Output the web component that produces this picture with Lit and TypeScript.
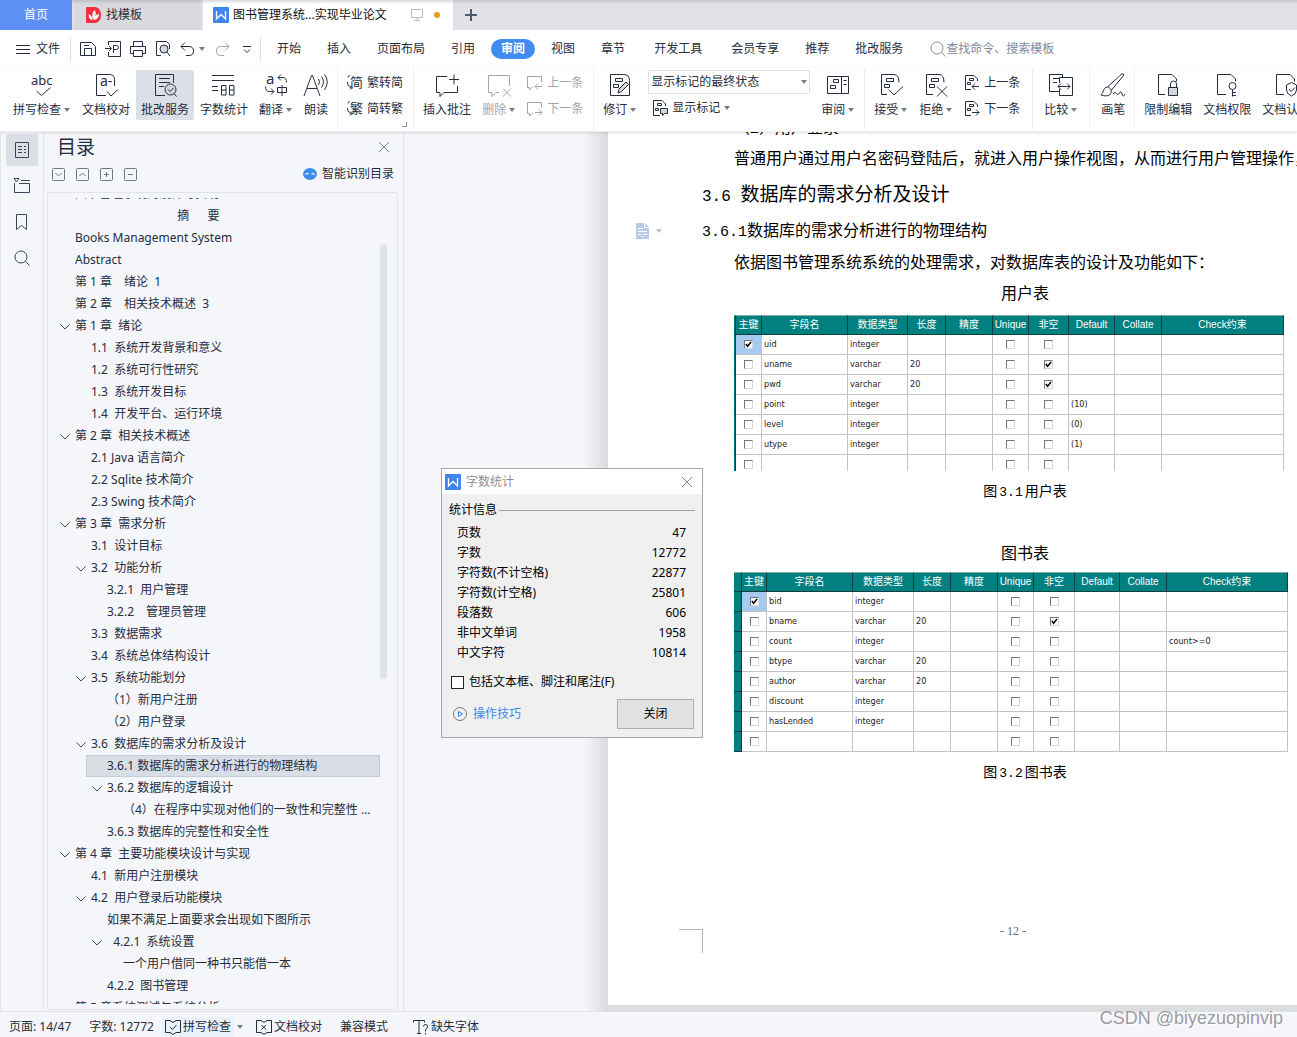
import { LitElement, html, svg, css, nothing, TemplateResult } from "lit";
import { customElement, property } from "lit/decorators.js";
import { classMap } from "lit/directives/class-map.js";

const ICONS: Record<string, TemplateResult> = {
  spell: svg`<text class="t" x="1" y="12" font-size="13">abc</text><path d="M6.5 18l5 4.5 9-8"/>`,
  proof: svg`<path d="M12 22.500H2.500V1.500H15.500Q20.500 1.500 20.500 6.500V13"/><text class="t" x="6" y="13" font-size="14">a-</text><path d="M13 18.500l4 4.500 7-6.500"/>`,
  service: svg`<path d="M12 22.500H2.500V1.500H20.500V10M6 5.500h11M6 9.500h11M6 13.500h5"/><circle class="soft" cx="17.500" cy="16.500" r="5.500"/><path d="M15 16.500l2 2 3.500-3.500M21 20.500l2.500 3"/>`,
  count: svg`<path d="M0 2.500h22M0 7.500h22M0 13.500h6M0 17.500h6M9.500 12.500h4.500v9.500h-4.500zM17.500 12.500h4.500v9.500h-4.500zM9.500 17h4.500M17.500 17h4.500"/>`,
  translate: svg`<text class="t" x="2" y="11" font-size="15">a</text><path d="M17 1.500l-3 3 3 3M14 4.500h5q3.500 0 3.500 5M1.500 13.500q0 5 4 5h4M7 15.500l3 3-3 3M13.500 14.500h9v5h-9zM18 12v11"/>`,
  read: svg`<path d="M0 23L7.500 2.500h1L16 23M3 15.500h10M14.500 6q2 2.500 0 6M17.500 3.500q4 5 0 11M20.500 1.500q5.500 7 0 15.500"/>`,
  comment: svg`<path d="M12 3.500H1.500v16h3.500v4l4-4h13.500V13M14 6.500h10M19 1.500v10"/>`,
  uncomment: svg`<path d="M12 19.500H9l-4 4v-4H1.500v-17h21V13M16 15.500l8 8M24 15.500l-8 8"/>`,
  revise: svg`<path d="M2.500 1.500H15.500Q21.500 1.500 21.500 7.500V22.500H2.500zM7.500 5.500h7v3h-7zM5.500 11.500h5v3h-5z"/><path class="soft" d="M10 20l1-4 7-7 2.500 2.500-7 7z"/>`,
  pane: svg`<path d="M1.500 3.500h21v17h-21zM15.500 3.500v17M7.500 6.500h5v3h-5zM4.500 12.500h5v3h-5zM17.500 7.500h3M17.500 11.500h3"/>`,
  accept: svg`<path d="M8 21.500H2.500v-20H15q5 0 5 8M7.500 5.500h7v3h-7zM5.500 11.500h5v3h-5zM9.500 16.500l5.500 5.500 9-8.500"/>`,
  reject: svg`<path d="M9 21.500H2.500v-20H15q5 0 5 8M7.500 5.500h7v3h-7zM5.500 11.500h5v3h-5zM13 13.500l10 10M23 13.500l-10 10"/>`,
  compare: svg`<path d="M10.500 18.500H.500v-17h13v3M4 5.500h7M4 9.500h4M10.500 10V4.500h13v18h-13V16M9 13.500h12M12 10.500l-3 3 3 3M18 10.500l3 3-3 3"/>`,
  brush: svg`<path d="M22.500 1q-2-.5-4 2L7 13.500l3.500 3.500L20.500 5q3-3 2-4M7 14q-3-.5-4 2.500t-3 5.500q6 2 9-.5 2-2 1-4.500M12 21q2-3 3.500-.5t3-.5 2.500 1 3 0"/>`,
  lock: svg`<path d="M9 21.500H2.500v-20H16l4.500 4.500v2.500M14.500 14v-3q0-3 3-3t3 3v3"/><path class="soft" d="M12.500 14.500h9v8h-9z"/>`,
  key: svg`<path d="M11 21.500H2.500v-20H16l4.500 4.500v2.500M17.500 16.500v7M17.500 19.500h3.500M17.500 22.500h3.500"/><circle cx="17.500" cy="13" r="3.500"/>`,
  shield: svg`<path d="M10 21.500H2.500v-20H16l4.500 4.500v2.500M12.500 12l5-2.500 5 2.500v5q0 4-5 6-5-2-5-6zM15 16l2 2.500 4-4"/>`,
  toSimple: svg`<text class="t" x="3" y="12" font-size="13">简</text><path d="M2.500 0l-1.500 2.500M.500 7q0 5 4 5.500M3 10.500l2 2-2 2"/>`,
  toTrad: svg`<text class="t" x="3" y="12" font-size="13">繁</text><path d="M2.500 0l-1.500 2.500M.500 7q0 5 4 5.500M3 10.500l2 2-2 2"/>`,
  prevC: svg`<path d="M6 12.500H5l-2.500 2.500v-2.500h-2v-11h14V7M8 11.500h7M11 8.500l-3 3 3 3"/>`,
  nextC: svg`<path d="M6 12.500H5l-2.500 2.500v-2.500h-2v-11h14V7M8 11.500h7M12 8.500l3 3-3 3"/>`,
  prevR: svg`<path d="M7 14.500H1.500v-14H10l3.500 3.500v2M5.500 3.500h4v2h-4zM3.500 7.500h3v2h-3zM8 11.500h7M11 8.500l-3 3 3 3"/>`,
  nextR: svg`<path d="M7 14.500H1.500v-14H10l3.500 3.500v2M5.500 3.500h4v2h-4zM3.500 7.500h3v2h-3zM8 11.500h7M12 8.500l3 3-3 3"/>`,
  marks: svg`<path d="M8 15.500H1.500v-15H10l3.500 3.500v2M5.500 3.500h4v2h-4zM3.500 8.500h3v2h-3z"/><path class="soft" d="M8.500 8.500h7v5h-3l-2 2v-2h-2z"/>`,
  menu: svg`<path d="M0 3.500h14M0 7.500h14M0 11.500h14"/>`,
  save: svg`<path d="M.500 1.500h11l4 4v9H.500zM4.500 14.500v-7h7v7M4 4.500h5"/>`,
  exportP: svg`<path d="M3.500 4V.500h12v15h-12V11M0 7.500h6M4 5l2.500 2.500L4 10M8.500 12V4.500h3q2 0 2 2t-2 2h-3"/>`,
  print: svg`<path d="M3.500 5.500v-5h9v5M3.500 12.500h-3v-7h15v7h-3M3.500 9.500h9v6h-9z"/>`,
  preview: svg`<path d="M6 14.500H1.500V.500h10l3 3V8"/><circle class="soft" cx="9" cy="8" r="4"/><path d="M12 11l3 4"/>`,
  undo: svg`<path d="M5 1.500l-4 4 4 4M1 5.500h8q4.500 0 4.500 4.500t-4.500 4.500H6"/>`,
  redo: svg`<path d="M11 1.500l4 4-4 4M15 5.500H7q-4.500 0-4.500 4.500T7 14.500h3"/>`,
  more: svg`<path d="M4 5.500h8M5 8.500l3 3 3-3"/>`,
  search: svg`<circle cx="7" cy="7" r="6"/><path d="M11.500 11.500l4 4"/>`,
  outline: svg`<path d="M1.500.500h13v15h-13zM4 4.500h4M10 4.500h2M4 7.500h4M10 7.500h2M4 10.500h4M10 10.500h2"/>`,
  chapters: svg`<path d="M0 .500h5L2.500 4zM7 2.500h9M.500 5v9.500h15v-9H5"/>`,
  bookmark: svg`<path d="M2.500.500h10v15l-5-4-5 4z"/>`,
  close: svg`<path d="M3 3l10 10M13 3L3 13"/>`,
  down: svg`<rect x=".500" y=".500" width="12" height="12" rx="1"/><path d="M3.500 5l3 3 3-3"/>`,
  up: svg`<rect x=".500" y=".500" width="12" height="12" rx="1"/><path d="M3.500 8l3-3 3 3"/>`,
  plus: svg`<rect x=".500" y=".500" width="12" height="12" rx="1"/><path d="M4 6.500h5M6.500 4v5"/>`,
  minus: svg`<rect x=".500" y=".500" width="12" height="12" rx="1"/><path d="M4 6.500h5"/>`,
  chevron: svg`<path d="M.500 3.500l4.500 4.500L9.500 3.500"/>`,
  screen: svg`<path d="M.500 2.500h11v8h-11zM6 10.500v3M3 13.500h6"/>`,
  add: svg`<path stroke-width="2" d="M1 7h12M7 1v12"/>`,
  checkBook: svg`<path d="M5 1.500H.500v12H5l3 2 3-2h4.500v-12H11l-3 2-3-2M5 8l2.500 2.500L11.500 6"/>`,
  crossBook: svg`<path d="M5 1.500H.500v12H5l3 2 3-2h4.500v-12H11l-3 2-3-2M5.500 6l4.500 4.500M10 6l-4.500 4.500"/>`,
  font: svg`<path d="M.500 3.500v-2h11v2M6 1.500v12.500M4 14.500h4M10.500 7.500q0-2 2-2t2 2-2 3v2M12.500 14v1.500"/>`,
  play: svg`<circle cx="7" cy="7" r="6.500"/><path class="blue" d="M5.500 4.500v5l4-2.500z"/>`,
};

const icon = (name: string, size = 16) =>
  html`<svg class="ico" width=${size} height=${size} viewBox="0 0 ${size} ${size}" aria-hidden="true">${ICONS[name]}</svg>`;

const caret = html`<span class="caret"></span>`;

const wLogo = html`<svg width="16" height="16" viewBox="0 0 16 16" aria-hidden="true">
  <rect width="16" height="16" rx="1" fill="#3f86f0"></rect>
  <path d="M3.500 4v8L8 7.500l4.500 4.500V4" fill="none" stroke="#fff" stroke-width="1.300"></path>
</svg>`;

const base = css`
  * { box-sizing: border-box; }
  :host { font: 12px/16px "Noto Sans", "Noto Sans CJK SC", sans-serif; color: #262d40; }
  button, select, input { font: inherit; color: inherit; margin: 0; padding: 0; border: 0; background: none; border-radius: 0; }
  button { display: inline-flex; align-items: center; white-space: nowrap; flex: none; }
  button:disabled { color: #a3a5ab; }
  svg { display: block; flex: none; }
  .ico { fill: none; stroke: currentColor; stroke-width: 1; overflow: visible; }
  .ico .t { fill: currentColor; stroke: none; }
  .ico .soft { fill: #d3d8df; }
  .ico .blue { stroke: #3d88ee; }
  .caret { flex: none; border: 3px solid transparent; border-top: 4px solid #75808f; border-bottom: 0; }
`;

@customElement("wps-tabs")
class WpsTabs extends LitElement {
  static styles = [base, css`
    :host { display: flex; height: 30px; background: linear-gradient(#c4c5c9, #e1e2e7 4px); }
    .tab { height: 30px; gap: 4px; padding-left: 12px; }
    .home { width: 72px; padding: 0; justify-content: center; background: #5d8ff5; color: #fff; }
    .tpl { width: 127px; margin-left: 2px; background: linear-gradient(#bfc0c4, #d8d9dc 4px); }
    .doc { width: 250px; margin-left: 2px; padding-left: 10px; background: linear-gradient(#d9dadc, #fff 4px); color: #111; }
    .screen { margin-left: 20px; color: #b3bccb; }
    .dot { width: 6px; height: 6px; margin-left: 3px; border-radius: 50%; background: #e89b0c; }
    .new { width: 36px; justify-content: center; color: #4e5970; }
  `];
  render() {
    return html`
      <button class="tab home">首页</button>
      <button class="tab tpl">
        <svg width="16" height="16" viewBox="0 0 16 16" aria-hidden="true">
          <path d="M1 0h9q5 2 5 8t-5 8H1q-1 0-1-1V1q0-1 1-1z" fill="#f3303f"></path>
          <path d="M6.500 13Q3 12.500 2.500 7.500q3.500 0 4 5.500zM7 12Q5 7 8.500 3q3 4-1 9.500zM8 13q0-5 5-6 0 5-5 6z" fill="#fff"></path>
        </svg>找模板</button>
      <button class="tab doc">${wLogo}图书管理系统...实现毕业论文
        <span class="screen">${icon("screen")}</span><span class="dot"></span></button>
      <button class="new" aria-label="新建标签">${icon("add", 14)}</button>`;
  }
}

@customElement("wps-menubar")
class WpsMenubar extends LitElement {
  static styles = [base, css`
    :host { display: flex; align-items: center; height: 38px; padding-left: 16px; background: #fff; }
    .file { gap: 5px; }
    .sep { width: 1px; height: 24px; background: #dcdfe5; flex: none; }
    .quick { display: flex; align-items: center; gap: 9px; padding: 0 5px 0 9px; }
    .file + .sep { margin-left: 10px; }
    .undo { gap: 3px; }
    .menus { display: flex; gap: 6px; padding-left: 6px; }
    .menus button { height: 20px; padding: 0 10px; border-radius: 10px; }
    .menus .spaced { margin-left: 3px; }
    .menus .on { background: #418cf0; color: #fff; font-weight: 700; }
    .find { display: flex; align-items: center; margin-left: 17px; color: #8490a6; }
    .find input { width: 160px; }
    .find input::placeholder { color: #7d89a1; opacity: 1; }
  `];
  render() {
    const menus = ["开始", "插入", "页面布局", "引用", "审阅", "视图", "章节", "开发工具", "会员专享", "推荐", "批改服务"];
    const spaced = ["开发工具", "会员专享"];
    return html`
      <button class="file">${icon("menu", 15)}文件</button><span class="sep"></span>
      <div class="quick">
        <button aria-label="保存">${icon("save")}</button>
        <button aria-label="输出为PDF">${icon("exportP")}</button>
        <button aria-label="打印">${icon("print")}</button>
        <button aria-label="打印预览">${icon("preview")}</button>
        <button class="undo" aria-label="撤销">${icon("undo")}${caret}</button>
        <button aria-label="恢复" disabled>${icon("redo")}</button>
        <button aria-label="更多">${icon("more")}</button>
      </div>
      <span class="sep"></span>
      <div class="menus">${menus.map((m) => html`<button class=${classMap({ on: m === "审阅", spaced: spaced.includes(m) })}>${m}</button>`)}</div>
      <label class="find">${icon("search")}<input aria-label="搜索" placeholder="查找命令、搜索模板"></label>`;
  }
}

@customElement("wps-ribbon")
class WpsRibbon extends LitElement {
  static styles = [base, css`
    :host { display: flex; height: 64px; padding-left: 8px; background: #fff; overflow: hidden; border-bottom: 1px solid #eceef1; position: relative; z-index: 1; box-shadow: 0 1px 3px rgba(0, 0, 0, .12); }
    .big { flex-direction: column; height: 50px; margin: 2px 1px 0 0; padding: 3px 5px 0; gap: 5px; }
    .big.on { background: #dbe0e6; border-radius: 2px; }
    .big:has(+ .sep) { margin-right: 0; }
    .label { display: flex; align-items: center; }
    .label .caret { margin: 0 1px 0 3px; }
    .sep { flex: none; width: 1px; height: 62px; margin: 0 4px; background: #eceef1; }
    .sep.wide { margin: 0 6px; }
    .stack { display: flex; flex-direction: column; flex: none; gap: 6px; padding: 5px 6px 0 5px; position: relative; }
    .stack button { gap: 4px; height: 20px; }
    .corner { position: absolute; right: 2px; bottom: 4px; width: 5px; height: 5px; border: solid #8a94a3; border-width: 0 1px 1px 0; }
    .view { padding-top: 2px; gap: 4px; }
    .pick { position: relative; display: flex; align-items: center; }
    .pick select { appearance: none; width: 162px; height: 24px; padding-left: 2px; border: 1px solid #dcdfe4; border-radius: 2px; background: #fff; }
    .pick .caret { position: absolute; right: 3px; pointer-events: none; }
    .view button { margin-left: 4px; }
  `];
  big(ic: string, text: string, drop = false, on = false, off = false) {
    return html`<button class=${classMap({ big: true, on })} ?disabled=${off}>${icon(ic, 24)}<span class="label">${text}${drop ? caret : nothing}</span></button>`;
  }
  small(ic: string, text: string, off = false) {
    return html`<button ?disabled=${off}>${icon(ic)}${text}</button>`;
  }
  render() {
    const sep = html`<span class="sep"></span>`;
    const wide = html`<span class="sep wide"></span>`;
    return html`
      ${this.big("spell", "拼写检查", true)}${this.big("proof", "文档校对")}${this.big("service", "批改服务", false, true)}
      ${this.big("count", "字数统计")}${this.big("translate", "翻译", true)}${this.big("read", "朗读")}${sep}
      <div class="stack">${this.small("toSimple", "繁转简")}${this.small("toTrad", "简转繁")}<span class="corner"></span></div>${sep}
      ${this.big("comment", "插入批注")}${this.big("uncomment", "删除", true, false, true)}
      <div class="stack">${this.small("prevC", "上一条", true)}${this.small("nextC", "下一条", true)}</div>${sep}
      ${this.big("revise", "修订", true)}
      <div class="stack view">
        <span class="pick"><select aria-label="显示状态"><option>显示标记的最终状态</option></select>${caret}</span>
        <button>${icon("marks")}显示标记${caret}</button>
      </div>
      ${this.big("pane", "审阅", true)}${sep}
      ${this.big("accept", "接受", true)}${this.big("reject", "拒绝", true)}
      <div class="stack">${this.small("prevR", "上一条")}${this.small("nextR", "下一条")}</div>${wide}
      ${this.big("compare", "比较", true)}${wide}
      ${this.big("brush", "画笔")}${sep}
      ${this.big("lock", "限制编辑")}${this.big("key", "文档权限")}${this.big("shield", "文档认证")}`;
  }
}

type Row = [level: number, text: string, open?: boolean];
const TOC: Row[] = [
  [0, "图书管理系统的设计与实现"],
  [0, "\u3000\u3000\u3000\u3000\u3000\u3000\u3000\u3000  摘\u3000  要"],
  [0, "Books Management System"],
  [0, "Abstract"],
  [0, "第 1 章\u3000绪论  1"],
  [0, "第 2 章\u3000相关技术概述  3"],
  [0, "第 1 章  绪论", true],
  [1, "1.1  系统开发背景和意义"],
  [1, "1.2  系统可行性研究"],
  [1, "1.3  系统开发目标"],
  [1, "1.4  开发平台、运行环境"],
  [0, "第 2 章  相关技术概述", true],
  [1, "2.1 Java 语言简介"],
  [1, "2.2 Sqlite 技术简介"],
  [1, "2.3 Swing 技术简介"],
  [0, "第 3 章  需求分析", true],
  [1, "3.1  设计目标"],
  [1, "3.2  功能分析", true],
  [2, "3.2.1  用户管理"],
  [2, "3.2.2\u3000管理员管理"],
  [1, "3.3  数据需求"],
  [1, "3.4  系统总体结构设计"],
  [1, "3.5  系统功能划分", true],
  [2, "（1）新用户注册"],
  [2, "（2）用户登录"],
  [1, "3.6  数据库的需求分析及设计", true],
  [2, "3.6.1 数据库的需求分析进行的物理结构"],
  [2, "3.6.2 数据库的逻辑设计", true],
  [3, "（4）在程序中实现对他们的一致性和完整性 的控制"],
  [2, "3.6.3 数据库的完整性和安全性"],
  [0, "第 4 章  主要功能模块设计与实现", true],
  [1, "4.1  新用户注册模块"],
  [1, "4.2  用户登录后功能模块", true],
  [2, "如果不满足上面要求会出现如下图所示"],
  [2, "  4.2.1  系统设置", true],
  [3, "一个用户借同一种书只能借一本"],
  [2, "4.2.2  图书管理"],
  [0, "第 5 章系统测试与系统分析"],
];

@customElement("wps-outline")
class WpsOutline extends LitElement {
  static styles = [base, css`
    :host { display: flex; flex: none; min-height: 0; border-left: 1px solid #e3e6ea; }
    .rail { width: 43px; display: flex; flex-direction: column; align-items: center; gap: 4px; padding-top: 2px; border-right: 1px solid #e1e4e9; color: #3a455c; }
    .rail button { width: 32px; height: 32px; justify-content: center; border-radius: 2px; }
    .rail .on { background: #dbdfe6; }
    .panel { width: 360px; display: flex; flex-direction: column; padding: 4px 5px 0 3px; border-right: 1px solid #e1e4e9; }
    .head, .tools { display: flex; align-items: center; justify-content: space-between; padding-left: 10px; }
    .head { height: 22px; padding-right: 6px; }
    .head button { color: #7b8494; }
    h2 { margin: 0; font-size: 19px; line-height: 22px; font-weight: 400; }
    .tools { height: 26px; margin: 3px 0 5px; padding: 0 4px 0 5px; }
    .set { display: flex; gap: 11px; color: #6d7786; }
    .smart { gap: 5px; }
    .tree { flex: 1; min-height: 0; display: flex; margin: 0 0 1px; padding: 5px 10px 5px 6px; border: 1px solid #e1e4e9; border-radius: 2px; }
    .scroll { flex: 1; min-width: 0; overflow: hidden; }
    ul { list-style: none; margin: -15px 0 0; padding: 0; }
    li { display: flex; }
    .l1 { padding-left: 16px; } .l2 { padding-left: 32px; } .l3 { padding-left: 48px; }
    li button { flex: 1; min-width: 0; height: 22px; border: 1px solid transparent; padding-left: 5px; text-align: left; }
    li .on { background: #d9dde5; border-color: #c5ced8; }
    .slot { width: 15px; flex: none; color: #3f4a5e; }
    .name { flex: 1; min-width: 0; padding-right: 4px; overflow: hidden; text-overflow: ellipsis; white-space: pre; }
    .bar { width: 7px; margin-top: 46px; height: 54%; border-radius: 4px; background: #dfe2e6; }
  `];
  render() {
    return html`
      <nav class="rail" aria-label="侧栏">
        <button class="on" aria-label="目录">${icon("outline")}</button>
        <button aria-label="章节">${icon("chapters")}</button>
        <button aria-label="书签">${icon("bookmark")}</button>
        <button aria-label="查找">${icon("search")}</button>
      </nav>
      <section class="panel">
        <div class="head"><h2>目录</h2><button aria-label="关闭目录">${icon("close")}</button></div>
        <div class="tools">
          <div class="set">
            <button aria-label="展开">${icon("down", 13)}</button><button aria-label="收起">${icon("up", 13)}</button>
            <button aria-label="添加">${icon("plus", 13)}</button><button aria-label="删除">${icon("minus", 13)}</button>
          </div>
          <button class="smart"><svg width="14" height="14" viewBox="0 0 14 14" aria-hidden="true">
            <ellipse cx="7" cy="7" rx="7" ry="6" fill="#3d8bee"></ellipse>
            <path d="M2.500 8q1-2.500 3-1M8.500 7q2-1.500 3 1" fill="none" stroke="#fff" stroke-width="1.200"></path></svg>智能识别目录</button>
        </div>
        <div class="tree">
          <div class="scroll"><ul>${TOC.map(([level, text, open]) => html`
            <li class="l${level}"><button class=${classMap({ on: text.startsWith("3.6.1") })}>
              <span class="slot">${open ? icon("chevron", 10) : nothing}</span><span class="name">${text}</span></button></li>`)}</ul></div>
          <span class="bar"></span>
        </div>
      </section>`;
  }
}

type Field = { pk?: boolean; name?: string; type?: string; len?: string; required?: boolean; def?: string; check?: string };
const HEADS = ["", "主键", "字段名", "数据类型", "长度", "精度", "Unique", "非空", "Default", "Collate", "Check约束"];

@customElement("schema-table")
class SchemaTable extends LitElement {
  @property({ attribute: false }) widths: number[] = [];
  @property({ attribute: false }) fields: Field[] = [];
  @property({ type: Boolean, reflect: true }) cut = false;
  static styles = [base, css`
    :host { display: block; }
    table { table-layout: fixed; width: 0; border-collapse: separate; border-spacing: 0; color: #222; }
    th, td { height: 20px; overflow: hidden; white-space: nowrap; vertical-align: top; }
    th { padding: 0; border-right: 1px solid #123f3f; border-bottom: 1px solid #123f3f; border-top: 1px solid #8aa; background: #008080; color: #fff; font: 10px/18px "Liberation Sans", "Noto Sans CJK SC", sans-serif; text-align: center; }
    td { padding: 0 0 0 2px; border-right: 1px solid #c3c3c3; border-bottom: 1px solid #c3c3c3; font: 9px/18px "DejaVu Sans Condensed", "DejaVu Sans", sans-serif; }
    .edge { padding: 0; background: #008080; border-right: 1px solid #123f3f; border-bottom-color: #123f3f; }
    .box { padding: 0; text-align: center; }
    .box.on { background: #a6caf0; }
    :host([cut]) tr:last-child td { height: 16px; border-bottom: 0; }
    input { appearance: none; display: block; width: 9px; height: 9px; margin: 5px auto 0; background: #fff; border: 1px solid #d8d8d8; border-top-color: #777; border-left-color: #777; }
    input:checked { background: #fff url('data:image/svg+xml,<svg xmlns="http://www.w3.org/2000/svg" viewBox="0 0 8 8"><path d="M1 3.500L3 6l4-5" fill="none" stroke="black" stroke-width="1.800"/></svg>') center / 7px no-repeat; }
  `];
  box(label: string, checked = false, on = false) {
    return html`<td class=${classMap({ box: true, on })}><input type="checkbox" aria-label=${label} .checked=${checked}></td>`;
  }
  render() {
    return html`<table>
      <colgroup>${this.widths.map((w) => html`<col style="width:${w}px">`)}</colgroup>
      <thead><tr>${HEADS.map((h) => html`<th scope="col">${h}</th>`)}</tr></thead>
      <tbody>${this.fields.map((f) => html`<tr>
        <td class="edge"></td>${this.box("主键", f.pk, f.pk)}<td>${f.name}</td><td>${f.type}</td><td>${f.len}</td><td></td>
        ${this.box("Unique")}${this.box("非空", f.required)}<td>${f.def}</td><td></td><td>${f.check}</td></tr>`)}</tbody>
    </table>`;
  }
}

const USERS: Field[] = [
  { pk: true, name: "uid", type: "integer" },
  { name: "uname", type: "varchar", len: "20", required: true },
  { name: "pwd", type: "varchar", len: "20", required: true },
  { name: "point", type: "integer", def: "(10)" },
  { name: "level", type: "integer", def: "(0)" },
  { name: "utype", type: "integer", def: "(1)" },
  {},
];
const BOOKS: Field[] = [
  { pk: true, name: "bid", type: "integer" },
  { name: "bname", type: "varchar", len: "20", required: true },
  { name: "count", type: "integer", check: "count>=0" },
  { name: "btype", type: "varchar", len: "20" },
  { name: "author", type: "varchar", len: "20" },
  { name: "discount", type: "integer" },
  { name: "hasLended", type: "integer" },
  {},
];

@customElement("wps-document")
class WpsDocument extends LitElement {
  static styles = [base, css`
    :host { display: flex; flex: 1; min-width: 0; overflow: hidden; padding: 0 0 6px 204px; background: linear-gradient(90deg, transparent 180px, #d9dadd 204px, #dcdddf 204px); }
    .paper { flex: none; width: 810px; padding: 0 94px; background: #fff; color: #000; white-space: nowrap; overflow: hidden; display: flex; flex-direction: column; }
    p, h3, h4 { margin: 0; font: 16px/31px "Liberation Sans", "Noto Sans CJK SC", sans-serif; }
    .clip { margin-top: -20px; }
    .ind { padding-left: 32px; }
    .mid { padding-left: 24px; text-align: center; }
    h3 { font-size: 19px; line-height: 41px; }
    h4 { line-height: 32px; }
    .num { font-family: "Liberation Mono", monospace; font-size: 15px; line-height: 1; }
    h3 .num { font-size: 16px; }
    .mark { display: flex; align-items: center; }
    .hint { gap: 6px; width: 66px; margin-left: -66px; }
    .hint .caret { border-top-color: #b9bec7; }
    .cap { font-size: 14px; line-height: 40px; }
    .cap .num { font-size: 13px; padding: 0 2px; }
    .title { margin-top: 27px; }
    schema-table { margin: 6px 0 0 32px; }
    .title + schema-table { margin-top: 3px; }
    footer { display: flex; margin: 137px 0 0 -23px; }
    .crop { width: 24px; height: 24px; border: solid #b9b9b9; border-width: 1px 1px 0 0; }
    .page { flex: 1; text-align: center; padding-right: 1px; font: 12px/5px "Liberation Serif", serif; color: #666; }
  `];
  render() {
    return html`<article class="paper">
      <p class="ind clip">（2）用户登录</p>
      <p class="ind">普通用户通过用户名密码登陆后，就进入用户操作视图，从而进行用户管理操作，</p>
      <h3><span class="num">3.6 </span>数据库的需求分析及设计</h3>
      <div class="mark"><button class="hint" aria-label="段落选项">
        <svg width="14" height="16" viewBox="0 0 14 16" aria-hidden="true"><path d="M0 0h9l4 4v12H0z" fill="#b9cbe8"></path>
          <path d="M8.500 0v4.500H13M2 5.500h5M2 8.500h9M2 11.500h3M7 11.500h4M7 13.500h-2" stroke="#fff" fill="none"></path></svg>${caret}</button>
        <h4><span class="num">3.6.1</span>数据库的需求分析进行的物理结构</h4></div>
      <p class="ind">依据图书管理系统系统的处理需求，对数据库表的设计及功能如下：</p>
      <p class="mid">用户表</p>
      <schema-table cut .widths=${[2, 26, 86, 60, 38, 47, 36, 40, 46, 47, 122]} .fields=${USERS}></schema-table>
      <p class="mid cap">图<span class="num">3.1</span>用户表</p>
      <p class="mid title">图书表</p>
      <schema-table .widths=${[8, 25, 86, 61, 37, 47, 36, 41, 45, 47, 121]} .fields=${BOOKS}></schema-table>
      <p class="mid cap">图<span class="num">3.2</span>图书表</p>
      <footer><span class="crop"></span><span class="page">- 12 -</span></footer>
    </article>`;
  }
}

@customElement("count-dialog")
class CountDialog extends LitElement {
  static styles = [base, css`
    :host { display: block; width: 262px; border: 1px solid #a5a7aa; background: #f0f0f0; color: #000; }
    header { display: flex; align-items: center; gap: 5px; height: 25px; padding: 0 7px 0 3px; background: #fff; color: #8f8f8f; }
    header button { margin-left: auto; color: #888; }
    .legend { display: flex; align-items: center; gap: 2px; padding: 8px 7px 5px; }
    .legend::after { content: ""; flex: 1; height: 1px; background: #a0a0a0; }
    dl { margin: 0; padding: 0 16px 0 15px; }
    dl div { display: flex; justify-content: space-between; line-height: 20px; }
    dd { margin: 0; }
    .opt { display: flex; align-items: center; gap: 5px; padding: 11px 9px 0; }
    .opt input { appearance: none; width: 13px; height: 13px; border: 1px solid #222; background: #fff; }
    footer { display: flex; align-items: center; justify-content: space-between; padding: 9px 8px 8px 11px; }
    a { display: flex; align-items: center; gap: 6px; color: #3d88ee; text-decoration: none; }
    a svg { color: #777; }
    .ok { width: 77px; height: 30px; justify-content: center; border: 1px solid #adadad; background: #e1e1e1; }
  `];
  render() {
    const stats = [["页数", "47"], ["字数", "12772"], ["字符数(不计空格)", "22877"], ["字符数(计空格)", "25801"], ["段落数", "606"], ["非中文单词", "1958"], ["中文字符", "10814"]];
    return html`
      <header>${wLogo}字数统计<button aria-label="关闭">${icon("close")}</button></header>
      <div class="legend">统计信息</div>
      <dl>${stats.map(([k, v]) => html`<div><dt>${k}</dt><dd>${v}</dd></div>`)}</dl>
      <label class="opt"><input type="checkbox">包括文本框、脚注和尾注(F)</label>
      <footer><a href="#">${icon("play", 14)}操作技巧</a><button class="ok">关闭</button></footer>`;
  }
}

@customElement("wps-status")
class WpsStatus extends LitElement {
  static styles = [base, css`
    :host { display: flex; align-items: center; flex: none; height: 26px; padding: 4px 0 0 9px; border-top: 1px solid #dfe2e6; background: #f5f6f9; }
    button { height: 20px; gap: 2px; margin-right: 18px; }
    .spell { background: #e9f1fb; padding: 0 3px; margin: 0 3px 0 -10px; }
    .caret { margin-right: 13px; }
    .compat { margin-right: 25px; }
  `];
  render() {
    return html`<button>页面: 14/47</button><button>字数: 12772</button>
      <button class="spell">${icon("checkBook")}拼写检查</button>${caret}
      <button>${icon("crossBook")}文档校对</button><button class="compat">兼容模式</button>
      <button>${icon("font")}缺失字体</button>`;
  }
}

@customElement("app-root")
class AppRoot extends LitElement {
  static styles = [base, css`
    :host { display: flex; flex-direction: column; height: 100vh; position: relative; overflow: hidden; background: #f5f6f9; }
    main { flex: 1; min-height: 0; display: flex; }
    count-dialog { position: absolute; left: 441px; top: 468px; }
    .watermark { position: absolute; right: 14px; bottom: 8px; font: 18px/22px "Liberation Sans", sans-serif; color: #9b9c9f; text-shadow: 1px 1px 0 #fff; z-index: 2; }
  `];
  render() {
    return html`
      <wps-tabs></wps-tabs>
      <wps-menubar></wps-menubar>
      <wps-ribbon></wps-ribbon>
      <main><wps-outline></wps-outline><wps-document></wps-document></main>
      <wps-status></wps-status>
      <count-dialog role="dialog" aria-label="字数统计"></count-dialog>
      <span class="watermark">CSDN @biyezuopinvip</span>`;
  }
}
